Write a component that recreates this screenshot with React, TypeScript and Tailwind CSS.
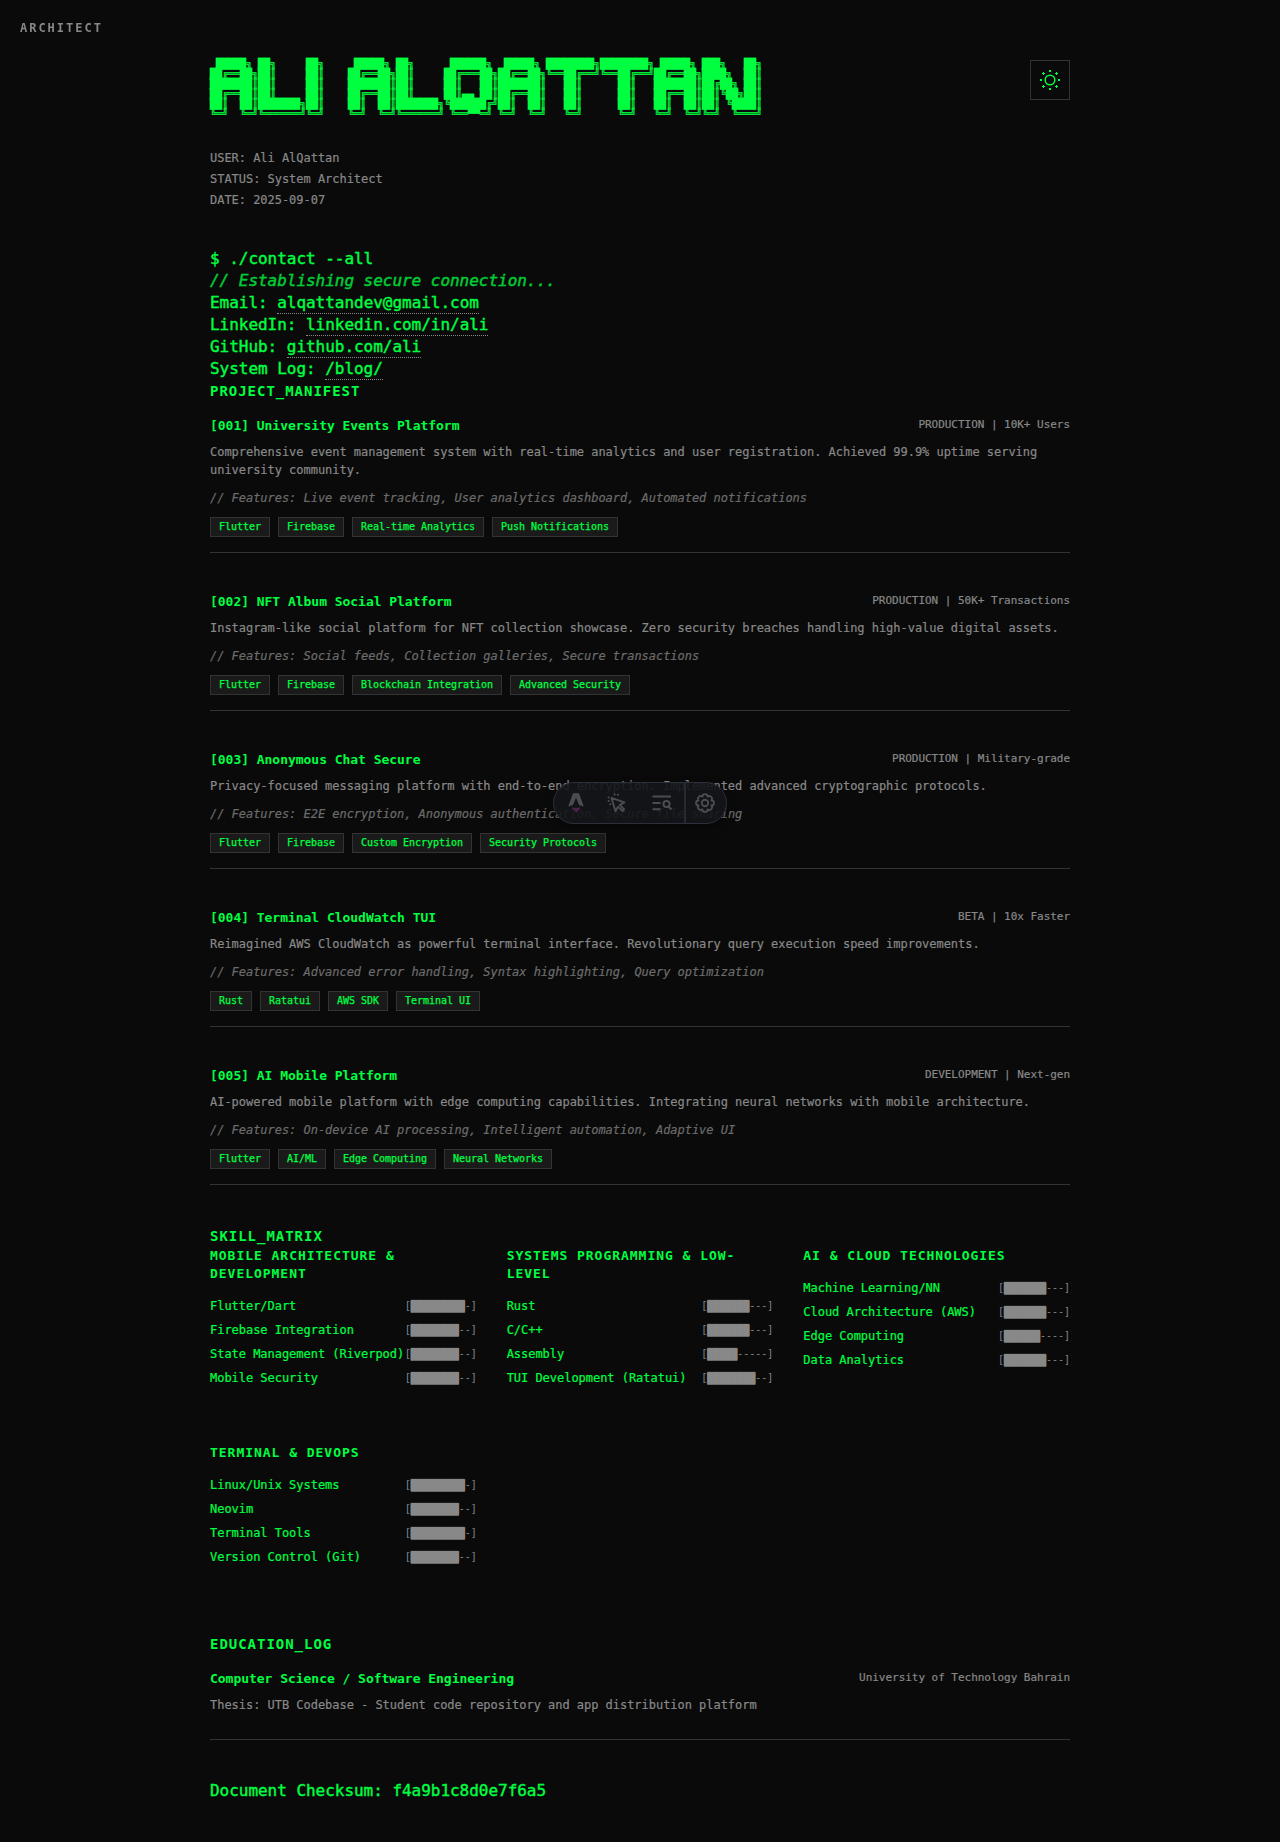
import React from "react";

const A = [" █████╗ ", "██╔══██╗", "███████║", "██╔══██║", "██║  ██║", "╚═╝  ╚═╝"];
const L = ["██╗     ", "██║     ", "██║     ", "██║     ", "███████╗", "╚══════╝"];
const I = ["██╗", "██║", "██║", "██║", "██║", "╚═╝"];
const Q = [" ██████╗ ", "██╔═══██╗", "██║   ██║", "██║▄▄ ██║", "╚██████╔╝", " ╚══▀▀═╝ "];
const T = ["████████╗", "╚══██╔══╝", "   ██║   ", "   ██║   ", "   ██║   ", "   ╚═╝   "];
const N = ["███╗   ██╗", "████╗  ██║", "██╔██╗ ██║", "██║╚██╗██║", "██║ ╚████║", "╚═╝  ╚═══╝"];
const GAP = ["    ", "    ", "    ", "    ", "    ", "    "];
const banner = A.map((_, row) => [A, L, I, GAP, A, L, Q, A, T, T, A, N].map((g) => g[row]).join("")).join("\n");

const contacts = [
  ["Email", "alqattandev@gmail.com"],
  ["LinkedIn", "linkedin.com/in/ali"],
  ["GitHub", "github.com/ali"],
  ["System Log", "/blog/"],
];

const projects = [
  {
    title: "[001] University Events Platform",
    status: "PRODUCTION | 10K+ Users",
    text: "Comprehensive event management system with real-time analytics and user registration. Achieved 99.9% uptime serving university community.",
    features: "Live event tracking, User analytics dashboard, Automated notifications",
    tags: ["Flutter", "Firebase", "Real-time Analytics", "Push Notifications"],
  },
  {
    title: "[002] NFT Album Social Platform",
    status: "PRODUCTION | 50K+ Transactions",
    text: "Instagram-like social platform for NFT collection showcase. Zero security breaches handling high-value digital assets.",
    features: "Social feeds, Collection galleries, Secure transactions",
    tags: ["Flutter", "Firebase", "Blockchain Integration", "Advanced Security"],
  },
  {
    title: "[003] Anonymous Chat Secure",
    status: "PRODUCTION | Military-grade",
    text: "Privacy-focused messaging platform with end-to-end encryption. Implemented advanced cryptographic protocols.",
    features: "E2E encryption, Anonymous authentication, Secure file sharing",
    tags: ["Flutter", "Firebase", "Custom Encryption", "Security Protocols"],
  },
  {
    title: "[004] Terminal CloudWatch TUI",
    status: "BETA | 10x Faster",
    text: "Reimagined AWS CloudWatch as powerful terminal interface. Revolutionary query execution speed improvements.",
    features: "Advanced error handling, Syntax highlighting, Query optimization",
    tags: ["Rust", "Ratatui", "AWS SDK", "Terminal UI"],
  },
  {
    title: "[005] AI Mobile Platform",
    status: "DEVELOPMENT | Next-gen",
    text: "AI-powered mobile platform with edge computing capabilities. Integrating neural networks with mobile architecture.",
    features: "On-device AI processing, Intelligent automation, Adaptive UI",
    tags: ["Flutter", "AI/ML", "Edge Computing", "Neural Networks"],
  },
];

const skills: { name: string; items: [string, number][] }[] = [
  { name: "MOBILE ARCHITECTURE & DEVELOPMENT", items: [["Flutter/Dart", 9], ["Firebase Integration", 8], ["State Management (Riverpod)", 8], ["Mobile Security", 8]] },
  { name: "SYSTEMS PROGRAMMING & LOW-LEVEL", items: [["Rust", 7], ["C/C++", 7], ["Assembly", 5], ["TUI Development (Ratatui)", 8]] },
  { name: "AI & CLOUD TECHNOLOGIES", items: [["Machine Learning/NN", 7], ["Cloud Architecture (AWS)", 7], ["Edge Computing", 6], ["Data Analytics", 7]] },
  { name: "TERMINAL & DEVOPS", items: [["Linux/Unix Systems", 9], ["Neovim", 8], ["Terminal Tools", 9], ["Version Control (Git)", 8]] },
];

function SectionTitle({ children }: { children: React.ReactNode }) {
  return <h2 className="text-[14px] leading-[20px] font-bold tracking-[0.97px]">{children}</h2>;
}

function Toolbar() {
  return (
    <div className="fixed left-[553px] top-[782px] flex h-[42px] w-[174px] items-center rounded-full border border-[#2c303a] bg-[#13151a]/90 text-[#4b4c51] shadow-[0_4px_12px_rgba(0,0,0,0.3)]">
      <div className="flex w-[44px] justify-center">
        <svg width="16" height="20" viewBox="0 0 16 20">
          <path fill="currentColor" d="M5 .3h6L15.800 13.500a18 18 0 0 0-4.600-1.300L8 4.800l-3.200 7.400a18 18 0 0 0-4.600 1.300z" />
          <path fill="#4b2347" d="M4 14.200c2.400 1 5.600 1 8 0 .2 1.900-.8 2.800-2 3.600L8 20c-.2-1.500-1-1.900-2.200-2.700C4.400 16.500 3.800 15.400 4 14.200z" />
        </svg>
      </div>
      <div className="flex w-[38px] justify-center">
        <svg width="20" height="20" viewBox="0 0 20 20" fill="none" stroke="currentColor" strokeWidth="1.900" strokeLinejoin="round">
          <path d="M4.500 5 17.500 9.300l-4.700 2.500 4.400 4.500-1.700 1.700-4.500-4.400-2.500 4.700z" />
          <path d="M7.500.5v2M11.300.8l-.8 1.700M.8 4.300l1.700.4M.8 8.200l1.700-.5M2.800 11.800 3.800 10.500" />
        </svg>
      </div>
      <div className="flex w-[48px] justify-center pl-[3px]">
        <svg width="20" height="16" viewBox="0 0 20 16" fill="none" stroke="currentColor" strokeWidth="2">
          <path d="M.5 1.500h18.500M.5 8h8M.5 14.300h8M16.500 11.500l3 3" />
          <circle cx="14.500" cy="9" r="3.100" />
        </svg>
      </div>
      <div className="h-full w-[2px] bg-[#272a32]" />
      <div className="flex w-[37px] justify-center">
        <svg width="20" height="20" viewBox="0 0 20 20" fill="none" stroke="currentColor" strokeWidth="1.900" strokeLinejoin="round">
          <path d="M8 1.600Q10 .6 12 1.600L12.500 3.600 14.500 2.800Q16.600 3.400 17.200 5.500L16.400 7.500 18.400 8Q19.400 10 18.400 12L16.400 12.500 17.200 14.500Q16.600 16.600 14.500 17.200L12.500 16.400 12 18.400Q10 19.400 8 18.400L7.500 16.400 5.500 17.200Q3.400 16.600 2.800 14.500L3.600 12.500 1.600 12Q.6 10 1.600 8L3.600 7.500 2.800 5.500Q3.400 3.400 5.500 2.800L7.500 3.600z" />
          <circle cx="10" cy="10" r="3.200" />
        </svg>
      </div>
    </div>
  );
}

export default function App() {
  return (
    <div className="min-h-[1842px] bg-[#0a0a0a] font-['DejaVu_Sans_Mono',monospace] text-[16px] leading-[22px] tracking-[-0.002em] text-[#00ff41] [font-variant-ligatures:none]">
      <div className="fixed left-5 top-5 text-[12px] leading-[17px] font-bold tracking-[1.98px] text-[#888]">ARCHITECT</div>
      <main className="mx-auto w-[860px] pt-[57px]">
        <header className="flex h-[91px] items-start justify-between">
          <pre className="mt-[2px] font-['DejaVu_Sans_Mono',monospace] text-[10px] leading-[10px] tracking-[-0.021px] [-webkit-text-stroke:0.2px]">{banner}</pre>
          <button className="mt-[3px] flex size-10 items-center justify-center border border-[#333]">
            <svg width="20" height="20" viewBox="0 0 20 20" fill="currentColor">
              <circle cx="10" cy="10" r="4.800" fill="none" stroke="currentColor" strokeWidth="1.500" />
              <path d="M9 0h2v2H9zM9 18h2v2H9zM0 9h2v2H0zM18 9h2v2h-2z" />
              <path d="M3.500 2v3M2 3.500h3M16.500 2v3M15 3.500h3M3.500 15v3M2 16.500h3M16.500 15v3M15 16.500h3" stroke="currentColor" strokeWidth="1" />
            </svg>
          </button>
        </header>

        <div className="text-[12px] leading-[21px] text-[#888] [-webkit-text-stroke:0.2px]">
          <div>USER: Ali AlQattan</div>
          <div>STATUS: System Architect</div>
          <div>DATE: 2025-09-07</div>
        </div>

        <section className="mt-[37px] h-[133px] [-webkit-text-stroke:0.4px]">
          <div>$ ./contact --all</div>
          <div className="italic opacity-80">// Establishing secure connection...</div>
          {contacts.map(([label, link]) => (
            <div key={label}>
              {label}: <a className="border-b border-dotted border-[#888] pb-px">{link}</a>
            </div>
          ))}
        </section>

        <section>
          <SectionTitle>PROJECT_MANIFEST</SectionTitle>
          <div className="mt-4">
            {projects.map((p) => (
              <article key={p.title} className="mb-10 border-b border-[#333] pb-[15px]">
                <div className="flex justify-between">
                  <h3 className="text-[13px] leading-[18px] font-bold">{p.title}</h3>
                  <span className="text-[11px] leading-[15px] text-[#888] [-webkit-text-stroke:0.2px]">{p.status}</span>
                </div>
                <p className="mt-2 text-[12px] leading-[18px] text-[#888] [-webkit-text-stroke:0.2px]">{p.text}</p>
                <p className="mt-[10px] text-[12px] leading-[18px] text-[#6c6c6c] italic [-webkit-text-stroke:0.2px]">// Features: {p.features}</p>
                <div className="mt-[10px] flex gap-2">
                  {p.tags.map((t) => (
                    <span key={t} className="h-5 border border-[#333] bg-[#1a1a1a] px-2 text-[10px] leading-[18px] tracking-[-0.021px] [-webkit-text-stroke:0.25px]">{t}</span>
                  ))}
                </div>
              </article>
            ))}
          </div>
        </section>

        <section className="pt-px">
          <SectionTitle>SKILL_MATRIX</SectionTitle>
          <div className="mt-px grid grid-cols-3 gap-x-[30px]">
            {skills.map((s) => (
              <div key={s.name} className="mb-[50px]">
                <h3 className="mb-[15px] text-[13px] leading-[18px] font-bold tracking-[0.97px]">{s.name}</h3>
                {s.items.map(([name, n]) => (
                  <div key={name} className="flex h-6 items-start justify-between whitespace-nowrap">
                    <span className="text-[12px] leading-[17px] [-webkit-text-stroke:0.2px]">{name}</span>
                    <span className="w-[72px] text-[10px] leading-[15px] tracking-[-0.021px] text-[#888]">
                      [<span className="[text-shadow:0_1px_0_#888]">{"█".repeat(n)}</span>{"-".repeat(10 - n)}]
                    </span>
                  </div>
                ))}
              </div>
            ))}
          </div>
        </section>

        <section className="pt-[11px]">
          <SectionTitle>EDUCATION_LOG</SectionTitle>
          <div className="mt-4 border-b border-[#333] pb-[25px]">
            <div className="flex justify-between">
              <h3 className="text-[13px] leading-[18px] font-bold">Computer Science / Software Engineering</h3>
              <span className="text-[11px] leading-[15px] text-[#888] [-webkit-text-stroke:0.2px]">University of Technology Bahrain</span>
            </div>
            <p className="mt-2 text-[12px] leading-[18px] text-[#888] [-webkit-text-stroke:0.2px]">Thesis: UTB Codebase - Student code repository and app distribution platform</p>
          </div>
        </section>

        <footer className="mt-10 [-webkit-text-stroke:0.4px]">Document Checksum: f4a9b1c8d0e7f6a5</footer>
      </main>
      <Toolbar />
    </div>
  );
}
